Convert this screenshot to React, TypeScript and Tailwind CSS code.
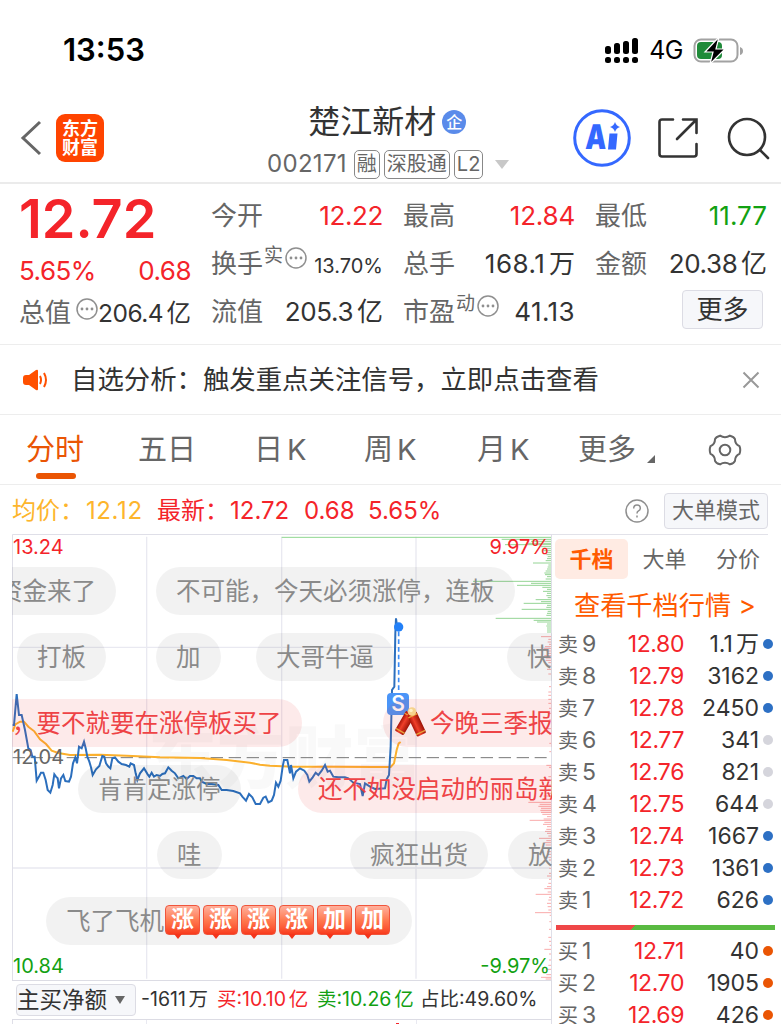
import React from 'react';

type Order = { label: string; level: number; price: string; volume: string; unit?: string; dot: 'blue' | 'gray' | 'orange' };
type Bullet = { text: string; tone: 'gray' | 'red'; place: string; cracker?: boolean; tiles?: string[] };

const SELLS: Order[] = [
  { label: '卖', level: 9, price: '12.80', volume: '1.1', unit: '万', dot: 'blue' },
  { label: '卖', level: 8, price: '12.79', volume: '3162', dot: 'blue' },
  { label: '卖', level: 7, price: '12.78', volume: '2450', dot: 'blue' },
  { label: '卖', level: 6, price: '12.77', volume: '341', dot: 'gray' },
  { label: '卖', level: 5, price: '12.76', volume: '821', dot: 'gray' },
  { label: '卖', level: 4, price: '12.75', volume: '644', dot: 'gray' },
  { label: '卖', level: 3, price: '12.74', volume: '1667', dot: 'blue' },
  { label: '卖', level: 2, price: '12.73', volume: '1361', dot: 'blue' },
  { label: '卖', level: 1, price: '12.72', volume: '626', dot: 'blue' },
];

const BUYS: Order[] = [
  { label: '买', level: 1, price: '12.71', volume: '40', dot: 'orange' },
  { label: '买', level: 2, price: '12.70', volume: '1905', dot: 'orange' },
  { label: '买', level: 3, price: '12.69', volume: '426', dot: 'orange' },
];

const DOTS = { blue: 'bg-[#2d70c4]', gray: 'bg-[#d5d5dc]', orange: 'bg-[#ea5504]' };

// Comments floating over the chart
const BULLETS: Bullet[] = [
  { text: '资金来了', tone: 'gray', place: 'left-[-34px] top-[33px]' },
  { text: '不可能，今天必须涨停，连板', tone: 'gray', place: 'left-[144px] top-[33px]' },
  { text: '打板', tone: 'gray', place: 'left-[5px] top-[99px]' },
  { text: '加', tone: 'gray', place: 'left-[144px] top-[99px]' },
  { text: '大哥牛逼', tone: 'gray', place: 'left-[244px] top-[99px]' },
  { text: '快', tone: 'gray', place: 'left-[495px] top-[99px]' },
  { text: '，要不就要在涨停板买了', tone: 'red', place: 'left-[-20px] top-[165px]' },
  { text: '今晚三季报', tone: 'red', place: 'left-[371px] top-[165px]', cracker: true },
  { text: '肯肯定涨停', tone: 'gray', place: 'left-[66px] top-[231px]' },
  { text: '还不如没启动的丽岛新', tone: 'red', place: 'left-[286px] top-[231px]' },
  { text: '哇', tone: 'gray', place: 'left-[145px] top-[297px]' },
  { text: '疯狂出货', tone: 'gray', place: 'left-[338px] top-[297px]' },
  { text: '放', tone: 'gray', place: 'left-[496px] top-[297px]' },
  { text: '飞了飞机', tone: 'gray', place: 'left-[34px] top-[363px]', tiles: ['涨', '涨', '涨', '涨', '加', '加'] },
];

const PRICE_LINE =
  '38,585 42,585 50,492 57,555 65,555 75,600 85,655 92,660 97,680 104,680 110,752 118,738 123,728 130,728 137,750 143,780 151,788 158,765 163,733 168,740 173,745 177,775 183,745 190,735 196,753 207,755 213,740 219,700 226,682 231,700 237,650 245,655 252,635 257,655 262,680 268,695 273,712 278,735 288,718 298,708 307,678 313,680 318,700 325,710 331,715 337,685 345,682 355,695 365,702 378,705 388,710 392,700 402,705 407,730 412,750 420,730 432,715 443,733 448,740 455,728 462,740 470,735 480,738 487,732 495,730 505,712 515,722 525,730 535,745 550,738 560,747 570,738 580,738 590,745 600,745 605,755 620,762 635,762 655,765 665,780 680,780 700,783 720,790 727,800 738,812 747,792 757,802 767,822 780,822 790,803 797,800 805,817 815,812 822,795 828,758 835,770 842,752 848,710 852,690 862,690 870,730 873,705 880,745 888,725 900,715 913,722 922,735 928,755 938,742 947,728 955,735 965,722 975,705 983,725 990,722 1000,740 1015,742 1035,742 1045,745 1060,758 1080,762 1088,798 1095,760 1110,770 1125,777 1155,775 1160,748 1167,735 1172,650 1176,480 1183,470 1186,310 1188,265 1190,280 1196,291';

const AVERAGE_LINE =
  '38,605 46,583 60,575 72,575 85,590 103,604 120,628 138,642 155,662 175,669 210,675 300,674 380,677 480,682 600,684 680,690 750,698 780,704 810,707 880,710 1000,710 1120,711 1172,711 1182,700 1190,660 1196,640 1202,636';

// [y, length] pairs, drawn leftwards from the right border
const GREEN_BARS = [
  [28, 148], [34, 60], [40, 70], [44, 138], [50, 30], [56, 20], [62, 24], [68, 12], [74, 14], [80, 10], [86, 12], [92, 16], [99, 54],
  [105, 8], [111, 10], [117, 12], [123, 16], [129, 20], [134, 18], [140, 12], [147, 16], [154, 234], [160, 60], [166, 102],
  [172, 26], [178, 12], [184, 24], [190, 12], [197, 14], [203, 10], [209, 46], [215, 30], [220, 82], [226, 12], [232, 14],
  [238, 88], [244, 10], [250, 12], [256, 14], [265, 166], [271, 52], [276, 42], [282, 12], [288, 14], [294, 12], [300, 12], [306, 12],
];

const RED_BARS = [
  [320, 30], [328, 8], [336, 10], [343, 6], [350, 18], [356, 22], [363, 14], [370, 12], [377, 20], [384, 16], [391, 16], [398, 8],
  [408, 6], [418, 12], [432, 8], [470, 6], [486, 8], [496, 8], [508, 8], [520, 8], [535, 6], [550, 8], [570, 6], [596, 10], [612, 6],
  [640, 5], [665, 5], [706, 14], [712, 6], [740, 8], [765, 8], [778, 10], [790, 14], [798, 22], [808, 28], [817, 68], [823, 34],
  [829, 38], [835, 30], [841, 32], [847, 30], [853, 26], [860, 12], [867, 22], [871, 64], [877, 20], [883, 24], [890, 12], [898, 14],
  [904, 18], [910, 12], [918, 8], [925, 36], [932, 14], [938, 20], [945, 16], [955, 6], [965, 12], [973, 10], [982, 8], [990, 6],
  [1005, 4], [1015, 5], [1030, 6], [1038, 12], [1048, 6], [1060, 8], [1070, 12], [1076, 20], [1086, 10], [1093, 46], [1102, 6],
  [1110, 8], [1120, 12], [1130, 10], [1140, 8], [1148, 48], [1156, 4], [1175, 5], [1198, 6], [1222, 8], [1234, 6], [1246, 4],
  [1258, 20], [1272, 6], [1290, 6], [1306, 8], [1318, 10], [1334, 14], [1342, 30], [1347, 16],
];

const MoreDots = () => (
  <svg className="w-[22px] h-[22px] shrink-0" viewBox="0 0 22 22" fill="none">
    <circle cx="11" cy="11" r="10" stroke="#8f8f8f" strokeWidth="1.5" />
    <circle cx="6" cy="11" r="1.4" fill="#8f8f8f" />
    <circle cx="11" cy="11" r="1.4" fill="#8f8f8f" />
    <circle cx="16" cy="11" r="1.4" fill="#8f8f8f" />
  </svg>
);

const Cracker = () => (
  <svg className="w-8 h-8 shrink-0" viewBox="0 0 32 32">
    <defs>
      <linearGradient id="tube" x1="0" x2="1">
        <stop offset="0" stopColor="#a81408" />
        <stop offset=".4" stopColor="#f0402a" />
        <stop offset="1" stopColor="#9c1206" />
      </linearGradient>
    </defs>
    <g transform="rotate(30 16 7)">
      <rect x="11" y="6" width="10" height="23" rx="1.500" fill="url(#tube)" />
      <path d="M11 9h10M11 26.500h10" stroke="#e9a23b" strokeWidth="1.400" />
    </g>
    <g transform="rotate(-25 18 7)">
      <rect x="13" y="6" width="10" height="24" rx="1.500" fill="url(#tube)" />
      <path d="M13 9h10M13 27.500h10" stroke="#e9a23b" strokeWidth="1.400" />
    </g>
    <circle cx="18" cy="4.500" r="4.300" fill="#f6d28c" />
    <circle cx="17" cy="3.500" r="1.800" fill="#fff0c4" />
  </svg>
);

const Tile = ({ text }: { text: string }) => (
  <span className="relative left-px w-[35px] h-[30px] mr-[3px] -mt-[3px] shrink-0 rounded-[4px] border border-[#f0553c] bg-linear-to-b from-[#ffb09c] via-[#ff7a50] to-[#f93a1c] flex items-center justify-center text-white text-[23px] font-bold leading-none">
    {text}
    <span className="absolute left-2 top-[28px] border-x-[4px] border-x-transparent border-t-[5px] border-t-[#f5341a]" />
  </span>
);

const Stat = ({ label, children, tone = 'text-[#333]' }: { label: React.ReactNode; children: React.ReactNode; tone?: string }) => (
  <div className="flex items-center justify-between h-12 whitespace-nowrap">
    <span className="flex items-center text-[#666]">{label}</span>
    <span className={tone}>{children}</span>
  </div>
);

const Unit = ({ children }: { children: string }) => <span className="ml-[0.14em] tracking-normal">{children}</span>;

const OrderRow = ({ order }: { order: Order }) => (
  <div className="h-8 flex items-center text-[23px] leading-8 whitespace-nowrap">
    <span className="w-[50px] text-[#666]">
      <span className="text-[20px] mr-[4px]">{order.label}</span>
      {order.level}
    </span>
    <span className="w-[76px] text-right tracking-[-0.4px] text-[#f4242a]">{order.price}</span>
    <span className="w-[75px] text-right text-[#333]">
      {order.volume}
      {order.unit && <Unit>{order.unit}</Unit>}
    </span>
    <span className={`ml-[4px] w-[10px] h-[10px] rounded-full shrink-0 ${DOTS[order.dot]}`}></span>
  </div>
);

const Chart = () => (
  <div className="relative w-[540px] h-[446px] overflow-hidden">
    <svg className="block w-full h-full" viewBox="36 12 1620 1338" fill="none">
      <g fontFamily="'Noto Sans CJK SC', sans-serif" fontSize="205" fontWeight="900" fill="#000" fillOpacity=".025">
        <text x="445" y="760">东方财富</text>
      </g>
      <path d="M440 20V1346M845 20V1346M1248 20V1346M38 352H1650M38 1014H1650" stroke="#e9e9f1" strokeWidth="4" />
      <path d="M37.500 1350V13.500H1656M1654.500 12V1350" stroke="#dfdfe8" strokeWidth="3" />
      <path d="M38 683H1640" stroke="#777" strokeWidth="3" strokeDasharray="37 17" />
      <path d="M845 22H1653" stroke="#90d690" strokeWidth="3" />
      {GREEN_BARS.map(([y, w]) => (
        <path key={y} d={`M1653 ${y}h${-w}`} stroke="#94d494" strokeWidth="3" />
      ))}
      {RED_BARS.map(([y, w]) => (
        <path key={y} d={`M1653 ${y}h${-w}`} stroke="#f9aaaa" strokeWidth="3" />
      ))}
      <polyline points={AVERAGE_LINE} stroke="#fbb02d" strokeWidth="6" />
      <polyline points={PRICE_LINE} stroke="#2c6fbd" strokeWidth="6" />
      <path d="M1196 305V490" stroke="#3b8cf7" strokeWidth="5" strokeDasharray="14 9" />
      <circle cx="1196" cy="291" r="14" fill="#2380f7" />
    </svg>

    <span className="absolute left-[1px] top-0 text-[20px] leading-[27px] text-[#f4242a]">13.24</span>
    <span className="absolute right-[2px] top-0 text-[20px] leading-[27px] text-[#f4242a]">9.97%</span>
    <span className="absolute left-[1px] top-[210px] text-[20px] leading-[27px] text-[#666]">12.04</span>
    <span className="absolute left-[1px] bottom-0 text-[20px] leading-[27px] text-[#12a112]">10.84</span>
    <span className="absolute right-[2px] bottom-0 text-[20px] leading-[27px] text-[#12a112]">-9.97%</span>

    <span className="absolute left-[375px] top-[159px] w-[22px] h-[22px] rounded-[4px] bg-[#4a95f8] text-white text-[21px] font-semibold leading-[22px] text-center">
      S
    </span>

    {BULLETS.map(b => (
      <div
        key={b.text}
        className={`absolute h-12 px-5 rounded-full flex items-center whitespace-nowrap text-[24.5px] ${b.place} ${
          b.tone === 'red' ? 'bg-[#f03c3c]/11 text-[#ee4346]' : 'bg-black/5 text-[#8a8a8a]'
        }`}
      >
        {b.cracker && <span className="mr-[4px] -ml-[9px]"><Cracker /></span>}
        {b.text}
        {b.tiles?.map((t, i) => <Tile key={i} text={t} />)}
      </div>
    ))}
  </div>
);

const App: React.FC = () => {
  return (
    <div className="w-[781px] h-[1024px] overflow-hidden bg-white text-[#333] font-['Inter','Noto_Sans_CJK_SC',sans-serif]">
      {/* Status bar */}
      <div className="h-[95px] pl-[63px] pr-[37px] pt-[6px] flex items-center justify-between text-black">
        <span className="text-[31px] font-semibold">13:53</span>
        <div className="flex items-center">
          <svg className="w-[36px] h-[26px]" viewBox="0 0 36 26">
            <rect x="1" y="8" width="6" height="8" rx="2.5" />
            <rect x="10" y="5" width="6" height="11" rx="2.5" />
            <rect x="19" y="3" width="6" height="13" rx="2.5" />
            <rect x="28" y="0" width="6" height="16" rx="2.5" />
            <rect x="1" y="19" width="6" height="6" rx="2.5" />
            <rect x="10" y="19" width="6" height="6" rx="2.5" />
            <rect x="19" y="19" width="6" height="6" rx="2.5" />
            <rect x="28" y="19" width="6" height="6" rx="2.5" />
          </svg>
          <span className="ml-[9px] text-[25px] tracking-[-0.5px]">4G</span>
          <svg className="ml-[9px] w-[52px] h-[28px]" viewBox="0 0 52 28">
            <rect x="2.5" y="2.5" width="43" height="22" rx="6.5" fill="none" stroke="#a2a2a2" strokeWidth="2" />
            <path d="M48 10q3 1 3 4t-3 4z" fill="#a2a2a2" />
            <rect x="5" y="5" width="25" height="17" rx="4" fill="#208b3a" />
            <path d="M27 0 13 15h8l-3 12 15-15h-9z" fill="#000" stroke="#fff" strokeWidth="1.2" />
          </svg>
        </div>
      </div>

      {/* Header */}
      <header className="h-[89px] border-b-2 border-[#ebebeb] pl-5 pr-3 flex items-start">
        <div className="w-[247px] pt-[19px] flex items-center">
          <svg className="w-[22px] h-[36px]" viewBox="0 0 22 36" fill="none" stroke="#666" strokeWidth="3">
            <path d="M20 2 3 18l17 16" />
          </svg>
          <div className="ml-[14px] w-12 h-12 rounded-[9px] bg-[#ff4400] text-white text-[18px] leading-[19px] font-bold flex flex-col items-center justify-center">
            <span>东方</span>
            <span>财富</span>
          </div>
        </div>

        <div className="flex flex-col items-center">
          <div className="flex items-center gap-[6px] h-[53px] -ml-[2px]">
            <span className="text-[32px] leading-[50px]">楚江新材</span>
            <span className="w-6 h-6 rounded-full bg-[#5a8bea] text-white text-[16px] font-medium flex items-center justify-center">企</span>
          </div>
          <div className="flex items-center gap-[4px] mt-px text-[#666] whitespace-nowrap">
            <span className="text-[24px] leading-[30px] mr-[3px] tracking-[0.3px]">002171</span>
            <span className="h-[29px] px-[2px] rounded-[5px] border border-[#888] text-[20px] leading-[27px]">融</span>
            <span className="h-[29px] px-[2px] rounded-[5px] border border-[#888] text-[20px] leading-[27px]">深股通</span>
            <span className="h-[29px] px-[2px] rounded-[5px] border border-[#888] text-[20px] leading-[27px]">L2</span>
            <span className="ml-[8px] border-x-[7px] border-x-transparent border-t-[9px] border-t-[#c8c8c8]"></span>
          </div>
        </div>

        <div className="ml-auto pt-[14px] w-[196px] flex items-center">
          <svg className="w-[58px] h-[58px] shrink-0" viewBox="0 0 58 58">
            <circle cx="29" cy="29" r="27.3" fill="none" stroke="#3468ff" strokeWidth="3" />
            <text transform="translate(12 40) scale(.78 1) skewX(-3)" fontFamily="Inter, sans-serif" fontSize="34" fontWeight="900" fill="#3468ff">A</text>
            <path d="M36.500 24.500h8l-1.500 16h-8z" fill="#3468ff" />
            <path d="M42 13q1.200 4 5 5-3.800 1-5 5-1.200-4-5-5 3.800-1 5-5z" fill="#3468ff" />
          </svg>
          <svg className="ml-[26px] w-[42px] h-[42px] shrink-0" viewBox="0 0 42 42" fill="none" stroke="#333" strokeWidth="2.600" strokeLinecap="round">
            <path d="M16 2.500H5Q2.500 2.500 2.500 5v32q0 2.500 2.500 2.500h32q2.500 0 2.500-2.500V27M26 2.500h13.500V16M39 3 20 22" />
          </svg>
          <svg className="ml-[28px] w-[43px] h-[43px] shrink-0" viewBox="0 0 43 43" fill="none" stroke="#333" strokeWidth="2.600" strokeLinecap="round">
            <circle cx="20" cy="20" r="18" />
            <path d="m33 33 8 8" />
          </svg>
        </div>
      </header>

      {/* Quote */}
      <section className="h-[161px] border-b border-[#ededed] pl-[19px] pt-[8px] grid grid-cols-[172px_172px_172px_172px] gap-x-5 text-[26px] leading-8">
        <div>
          <div className="h-[55px] text-[54px] leading-[54px] font-semibold text-[#f4242a] whitespace-nowrap">12.72</div>
          <div className="h-[48px] flex items-center justify-between tracking-[-0.5px] text-[#f4242a]">
            <span>5.65%</span>
            <span>0.68</span>
          </div>
          <div className="h-[36px] flex items-center justify-between whitespace-nowrap">
            <span className="text-[#666]">总值</span>
            <span className="-mt-2 ml-[5px]"><MoreDots /></span>
            <span className="text-[24.500px] tracking-[-0.5px]">206.4<Unit>亿</Unit></span>
          </div>
        </div>
        <div>
          <Stat label="今开" tone="text-[#f4242a] tracking-[-0.4px]">12.22</Stat>
          <Stat label={<>换手<span className="text-[19px] -mt-4 mr-[2px] ml-px">实</span><span className="-mt-3"><MoreDots /></span></>} tone="text-[20px] pt-1">13.70%</Stat>
          <Stat label="流值" tone="tracking-[-0.3px]">205.3<Unit>亿</Unit></Stat>
        </div>
        <div>
          <Stat label="最高" tone="text-[#f4242a] tracking-[-0.2px]">12.84</Stat>
          <Stat label="总手" tone="tracking-[0.5px]">168.1<Unit>万</Unit></Stat>
          <Stat label={<>市盈<span className="text-[19px] -mt-4 mr-[2px] ml-px">动</span><span className="-mt-3"><MoreDots /></span></>} tone="tracking-[0.4px]">41.13</Stat>
        </div>
        <div>
          <Stat label="最低" tone="text-[#12a112]">11.77</Stat>
          <Stat label="金额" tone="tracking-[-0.4px]">20.38<Unit>亿</Unit></Stat>
          <button className="ml-auto mr-[4px] mt-[2px] w-[81px] h-[39px] rounded-[4px] border border-[#dcdce4] bg-[#f6f7fa] flex items-center justify-center">
            更多
          </button>
        </div>
      </section>

      {/* Notice */}
      <section className="h-[70px] border-b border-[#ededed] pl-[22px] pr-[21px] flex items-center">
        <svg className="w-[27px] h-[24px]" viewBox="0 0 27 24">
          <path d="M4 7h3l7-5q2-1 2 1v18q0 2-2 1l-7-5H4q-3 0-3-3v-4q0-3 3-3z" fill="#ff5000" />
          <path d="M18 8q2 4 0 8M22 5q4 7 0 14" fill="none" stroke="#ff5000" strokeWidth="2" />
        </svg>
        <span className="ml-[22px] text-[26.400px]">自选分析：触发重点关注信号，立即点击查看</span>
        <svg className="ml-auto w-[18px] h-[18px]" viewBox="0 0 18 18" stroke="#999" strokeWidth="2">
          <path d="m1.500 1.500 15 15m0-15-15 15" />
        </svg>
      </section>

      {/* Tabs */}
      <nav className="h-[70px] border-b border-[#ededed] pl-[26px] flex items-center text-[29px] text-[#666] whitespace-nowrap">
        <div className="relative w-[112px] text-[#ea5504]">
          分时
          <span className="absolute left-[10px] top-[45px] w-10 h-[6px] rounded-full bg-[#ea5504]" />
        </div>
        <span className="w-[116px]">五日</span>
        <span className="w-[110px] flex gap-1">日<span>K</span></span>
        <span className="w-[113px] flex gap-1">周<span>K</span></span>
        <span className="w-[101px] flex gap-1">月<span>K</span></span>
        <span className="w-[130px] flex">
          更多
          <svg className="ml-[11px] mt-[27px] w-2 h-2" viewBox="0 0 8 8"><path d="M8 0v8H0z" fill="#666" /></svg>
        </span>
        <svg className="w-[34px] h-[34px]" viewBox="0 0 34 34" fill="none" stroke="#666" strokeWidth="2">
          <circle cx="17" cy="17" r="5.300" />
          <path d="M12 2.700Q17 6 22 2.700q4 1 5 3.500 0 5 4.500 7 1.500 3.800 0 7.600-4.500 2-4.500 7-1 2.500-5 3.500-5-3.300-10 0-4-1-5-3.500 0-5-4.500-7-1.500-3.800 0-7.600 4.500-2 4.500-7 1-2.500 5-3.500z" />
        </svg>
      </nav>

      {/* Price summary */}
      <div className="h-[49px] pl-3 pr-[13px] pt-[2px] flex items-center text-[24px] whitespace-nowrap">
        <span className="w-[145px] text-[#fdb52c]">均价：<span className="ml-[2px] tracking-[0.6px]">12.12</span></span>
        <span className="w-[147px] text-[#f4242a]">最新：<span className="ml-px">12.72</span></span>
        <span className="w-[64px] text-[#f4242a]">0.68</span>
        <span className="text-[#f4242a]">5.65%</span>
        <svg className="ml-auto w-6 h-6" viewBox="0 0 24 24" fill="none" stroke="#8f8f8f" strokeWidth="1.500">
          <circle cx="12" cy="12" r="11" />
          <path d="M8.700 9.500q0-3.500 3.300-3.500t3.300 3.200q0 1.700-1.800 2.700-1.500.9-1.500 2.600M12 16.500v2" />
        </svg>
        <button className="ml-[15px] w-[104px] h-[36px] rounded-[4px] border border-[#dcdce4] bg-[#f6f7fa] text-[22px] text-[#666] flex items-center justify-center">
          大单模式
        </button>
      </div>

      <main className="ml-3 flex items-start">
        <div className="w-[540px] shrink-0">
          <Chart />
          <div className="h-[40px] border-y border-r border-[#dcdce4] flex items-center text-[19.500px] whitespace-nowrap">
            <button className="ml-[4px] mr-[5px] w-[120px] h-[32px] rounded-[4px] border border-[#dcdce4] bg-[#f6f7fa] text-[22.500px] flex items-center shrink-0">
              主买净额
              <span className="ml-[8px] border-x-[5px] border-x-transparent border-t-[8px] border-t-[#666]" />
            </button>
            <span className="w-[76px]">-1611<Unit>万</Unit></span>
            <span className="w-[100px] text-[#f4242a]">买:10.10<Unit>亿</Unit></span>
            <span className="w-[103px] text-[#12a112]">卖:10.26<Unit>亿</Unit></span>
            <span>占比:49.60%</span>
          </div>
          <div className="h-6 border-x border-[#dfdfe8] flex">
            <span className="w-[134px] border-r border-[#e9e9f1]"></span>
            <span className="w-[135px]"></span>
            <span className="w-[135px] border-r border-[#e9e9f1] flex justify-end">
              <span className="mr-[17px] mt-[3px] w-[3px] h-1 bg-[#f4242a]"></span>
            </span>
          </div>
        </div>

        {/* Order book */}
        <aside className="w-[229px]">
          <div className="w-[216px] border-t border-[#e2e2e9] pl-[3px] pt-1 flex text-[22px] text-[#666]">
            <span className="w-[73px] h-10 shrink-0 rounded-[5px] bg-[#ffebe3] text-[#ff5a00] font-bold flex items-center justify-center">千档</span>
            <span className="w-[73px] h-10 shrink-0 flex items-center justify-center">大单</span>
            <span className="w-[74px] h-10 shrink-0 flex items-center justify-center">分价</span>
          </div>
          <div className="h-[48px] mt-[1px] pl-[22px] pt-[4px] text-[26.200px] leading-[44px] text-[#ff5a00] whitespace-nowrap">
            查看千档行情 &gt;
          </div>
          <div className="pl-[6px]">
            {SELLS.map(o => <OrderRow key={o.level} order={o} />)}
          </div>
          <div className="ml-[4px] mt-[9px] mb-[5px] w-[219px] h-[5px] bg-linear-[135deg,#ef4748_35.500%,#59ba41_35.500%]"></div>
          <div className="pl-[6px]">
            {BUYS.map(o => <OrderRow key={o.level} order={o} />)}
          </div>
        </aside>
      </main>
    </div>
  );
};

export default App;
